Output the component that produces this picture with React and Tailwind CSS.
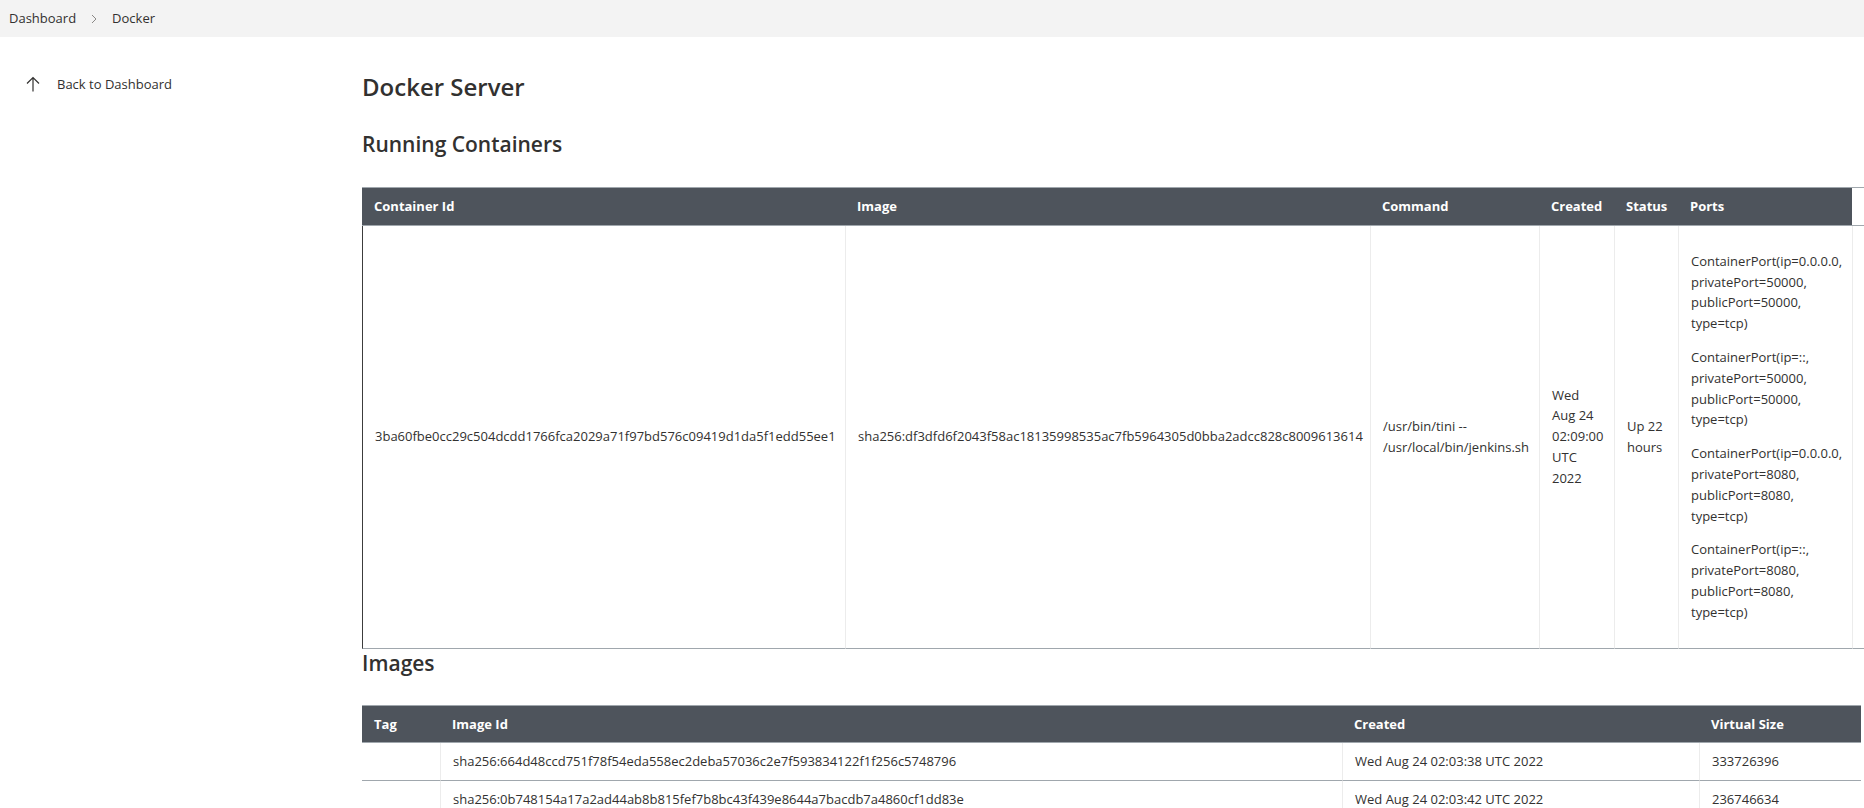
import React from 'react'

const ports = [
  ['ContainerPort(ip=0.0.0.0,', 'privatePort=50000,', 'publicPort=50000,', 'type=tcp)'],
  ['ContainerPort(ip=::,', 'privatePort=50000,', 'publicPort=50000,', 'type=tcp)'],
  ['ContainerPort(ip=0.0.0.0,', 'privatePort=8080,', 'publicPort=8080,', 'type=tcp)'],
  ['ContainerPort(ip=::,', 'privatePort=8080,', 'publicPort=8080,', 'type=tcp)'],
]

const images = [
  {
    tag: '',
    id: 'sha256:664d48ccd751f78f54eda558ec2deba57036c2e7f593834122f1f256c5748796',
    created: 'Wed Aug 24 02:03:38 UTC 2022',
    size: '333726396',
  },
  {
    tag: '',
    id: 'sha256:0b748154a17a2ad44ab8b815fef7b8bc43f439e8644a7bacdb7a4860cf1dd83e',
    created: 'Wed Aug 24 02:03:42 UTC 2022',
    size: '236746634',
  },
]

function Lines({ lines }) {
  return lines.map((l) => (
    <div key={l} className="whitespace-nowrap">
      {l}
    </div>
  ))
}

const th = 'border-t border-b border-[#a0a7ad] bg-[#4e545c] px-3 py-2 text-left font-bold text-white'
const td = 'border-b border-l border-b-[#a0a7ad] border-l-[#ececec] px-3 align-middle'
const tdFirst = 'border-b border-l border-b-[#a0a7ad] border-l-[#3c3c3c] px-3 align-middle'

export default function App() {
  return (
    <div
      className="h-screen w-full overflow-hidden bg-white text-[13px] leading-[1.6] text-[#323130]"
      style={{ fontFamily: '"Open Sans", "Noto Sans", sans-serif' }}
    >
      <div className="flex h-[37px] items-center gap-[15px] bg-[#f3f3f3] pl-[9px]">
        <span>Dashboard</span>
        <svg width="6" height="10" viewBox="0 0 6 10" fill="none">
          <path d="M1 1l4 4-4 4" stroke="#8a8886" strokeWidth="1" />
        </svg>
        <span>Docker</span>
      </div>

      <div className="flex">
        <div className="w-[362px] shrink-0 pt-[27px]">
          <a href="#" className="flex h-[40px] items-center gap-[17px] pl-[26px]">
            <svg width="14" height="16" viewBox="0 0 14 16" fill="none">
              <path d="M7 15.5V1.5M1 7.5l6-6 6 6" stroke="#323130" strokeWidth="1.2" />
            </svg>
            <span>Back to Dashboard</span>
          </a>
        </div>

        <div className="min-w-0 flex-1 pr-[3px] pt-[34px]">
          <h1 className="text-[24px] font-semibold leading-[32px]">Docker Server</h1>
          <h2 className="mt-[27px] text-[21px] font-semibold leading-[28px]">Running Containers</h2>

          <table className="mt-[29px] w-[1530px] table-fixed border-separate border-spacing-0">
            <thead>
              <tr>
                <th className={`${th} w-[483px]`}>Container Id</th>
                <th className={`${th} w-[525px]`}>Image</th>
                <th className={`${th} w-[169px]`}>Command</th>
                <th className={`${th} w-[75px]`}>Created</th>
                <th className={`${th} w-[64px]`}>Status</th>
                <th className={`${th} w-[174px]`}>Ports</th>
                <th className="w-[40px] border-t border-b border-[#a0a7ad] bg-white"></th>
              </tr>
            </thead>
            <tbody>
              <tr>
                <td className={`${tdFirst} whitespace-nowrap`}>
                  3ba60fbe0cc29c504dcdd1766fca2029a71f97bd576c09419d1da5f1edd55ee1
                </td>
                <td className={`${td} whitespace-nowrap`}>
                  sha256:df3dfd6f2043f58ac18135998535ac7fb5964305d0bba2adcc828c8009613614
                </td>
                <td className={td}>
                  <Lines lines={['/usr/bin/tini --', '/usr/local/bin/jenkins.sh']} />
                </td>
                <td className={td}>
                  <Lines lines={['Wed', 'Aug 24', '02:09:00', 'UTC', '2022']} />
                </td>
                <td className={td}>
                  <Lines lines={['Up 22', 'hours']} />
                </td>
                <td className={`${td} py-3`}>
                  {ports.map((p, i) => (
                    <div key={i} className="my-[13px]">
                      {p.map((l, j) => (
                        <div key={j} className="whitespace-nowrap">
                          {l}
                        </div>
                      ))}
                    </div>
                  ))}
                </td>
                <td className={td}></td>
              </tr>
            </tbody>
          </table>

          <h2 className="text-[21px] font-semibold leading-[28px]">Images</h2>

          <table className="mt-[28px] w-full table-fixed border-separate border-spacing-0">
            <thead>
              <tr>
                <th className={`${th} w-[78px]`}>Tag</th>
                <th className={`${th} w-[902px]`}>Image Id</th>
                <th className={`${th} w-[357px]`}>Created</th>
                <th className={th}>Virtual Size</th>
              </tr>
            </thead>
            <tbody>
              {images.map((img) => (
                <tr key={img.id}>
                  <td className="border-b border-[#a0a7ad] px-3 py-2">{img.tag}</td>
                  <td className={`${td} whitespace-nowrap py-2`}>{img.id}</td>
                  <td className={`${td} py-2`}>{img.created}</td>
                  <td className={`${td} py-2`}>{img.size}</td>
                </tr>
              ))}
            </tbody>
          </table>
        </div>
      </div>
    </div>
  )
}
